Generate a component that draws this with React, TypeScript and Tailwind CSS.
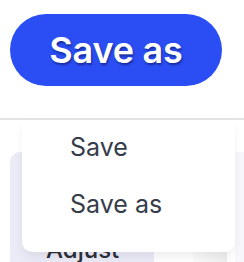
import React from "react";

export default function App() {
  return (
    <div
      className="relative w-[244px] h-[262px] overflow-hidden bg-white"
      style={{ fontFamily: "Inter, 'Noto Sans', sans-serif" }}
    >
      <div className="pt-[14px] pl-[10px]">
        <button className="flex h-[72px] w-[212px] items-center justify-center rounded-full bg-[#2a4ef4] text-[36px] font-semibold leading-none tracking-[-0.2px] text-white [text-shadow:1px_2px_2px_rgba(10,20,90,0.55)]">
          Save as
        </button>
      </div>
      <div className="mt-[32px] h-[2px] w-full bg-[#e3e3e3]" />
      <div className="mt-[32px] flex gap-0">
        <div className="ml-[10px] h-[120px] w-[144px] rounded-tl-[10px] bg-[#ebeaf7] pl-[36px] pt-[86px] text-[24px] font-medium leading-none text-[#2b2f3a]">
          Adjust
        </div>
        <div className="ml-[39px] h-[120px] w-[34px] bg-gradient-to-r from-[#fbfbfb] to-[#eeeeee]" />
        <div className="ml-[8px] h-[120px] w-[9px] bg-[#f6f6fb]" />
      </div>
      <div className="absolute left-[22px] top-[120px] flex h-[132px] w-[213px] flex-col rounded-b-[10px] bg-white pl-[48px] text-[25px] text-[#363d4a] shadow-[0_6px_12px_-2px_rgba(0,0,0,0.08)]">
        <div className="flex h-[56px] items-center">Save</div>
        <div className="flex h-[58px] items-center">Save as</div>
      </div>
    </div>
  );
}
